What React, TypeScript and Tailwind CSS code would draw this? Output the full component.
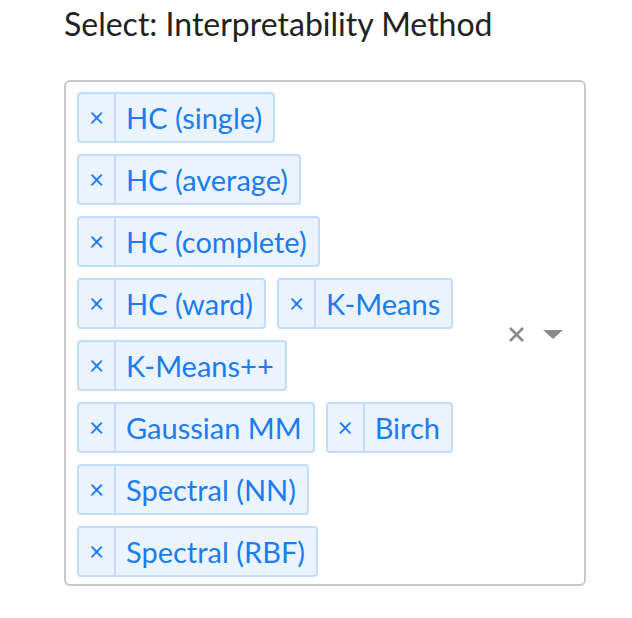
const methods = [
  'HC (single)',
  'HC (average)',
  'HC (complete)',
  'HC (ward)',
  'K-Means',
  'K-Means++',
  'Gaussian MM',
  'Birch',
  'Spectral (NN)',
  'Spectral (RBF)',
];

function Chip({ label }: { label: string }) {
  return (
    <div className="flex h-[51px] items-stretch rounded-[4px] border-2 border-[#c2dcfb] bg-[#ebf4fe] text-[#1a7cf0]">
      <span className="flex w-[37px] items-center justify-center border-r-2 border-[#c2dcfb] text-[26px]">
        ×
      </span>
      <span className="flex items-center pl-[10px] pr-[11px] text-[29px] leading-none">{label}</span>
    </div>
  );
}

export default function App() {
  return (
    <div className="min-h-screen bg-white pl-[64px] pt-[2px]" style={{ fontFamily: 'Lato, "Noto Sans", sans-serif' }}>
      <h2 className="text-[32px] leading-[44px] text-[#222]">Select: Interpretability Method</h2>

      <div className="mt-[34px] flex w-[522px] rounded-[6px] border-2 border-[#c8c8c8] pb-[7px] pl-[11px] pt-[10px]">
        <div className="flex w-[420px] flex-wrap content-start gap-[11px]">
          {methods.map((m) => (
            <Chip key={m} label={m} />
          ))}
        </div>

        <div className="flex flex-1 items-center justify-end gap-[18px] pr-[21px]">
          <svg width="17" height="17" viewBox="0 0 17 17">
            <path d="M2 2 L15 15 M15 2 L2 15" stroke="#8a8a8a" strokeWidth="2.6" />
          </svg>
          <svg width="20" height="10" viewBox="0 0 20 10">
            <path d="M0 0 L20 0 L10 9 Z" fill="#8a8a8a" />
          </svg>
        </div>
      </div>
    </div>
  );
}
